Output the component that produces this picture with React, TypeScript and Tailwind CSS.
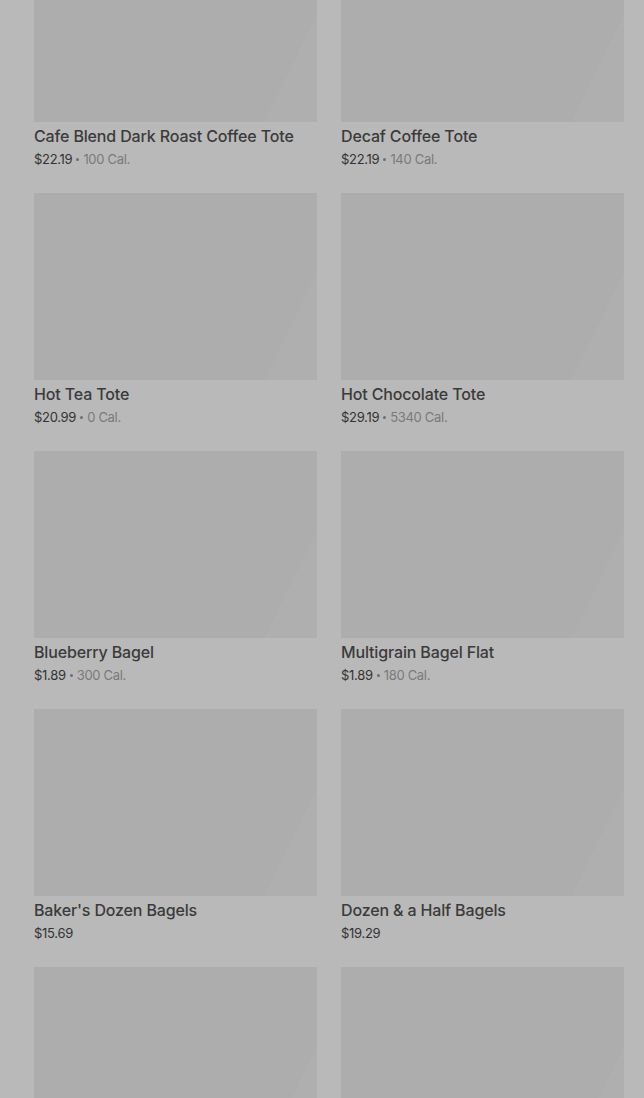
import React from "react";

type Item = { name: string; price: string; cal?: string };

const items: Item[] = [
  { name: "Cafe Blend Dark Roast Coffee Tote", price: "$22.19", cal: "100 Cal." },
  { name: "Decaf Coffee Tote", price: "$22.19", cal: "140 Cal." },
  { name: "Hot Tea Tote", price: "$20.99", cal: "0 Cal." },
  { name: "Hot Chocolate Tote", price: "$29.19", cal: "5340 Cal." },
  { name: "Blueberry Bagel", price: "$1.89", cal: "300 Cal." },
  { name: "Multigrain Bagel Flat", price: "$1.89", cal: "180 Cal." },
  { name: "Baker's Dozen Bagels", price: "$15.69" },
  { name: "Dozen & a Half Bagels", price: "$19.29" },
  { name: "", price: "" },
  { name: "", price: "" },
];

function Card({ item }: { item: Item }) {
  return (
    <div className="flex flex-col">
      <div className="h-[187px] w-full bg-[linear-gradient(116deg,#adadad_86%,#afafaf_86%)]" />
      <div className="h-[71px] pt-[4px]">
        {item.name && (
          <>
            <div className="text-[16px] leading-[20px] font-medium text-[#3b3b3b] tracking-[-0.15px]">
              {item.name}
            </div>
            <div className="mt-[4px] flex items-center text-[13px] leading-[18px] tracking-[-0.3px]">
              <span className="text-[#333333]">{item.price}</span>
              {item.cal && (
                <>
                  <span className="mx-[4px] inline-block h-[3px] w-[3px] rounded-full bg-[#6e6e6e]" />
                  <span className="text-[#7a7a7a]">{item.cal}</span>
                </>
              )}
            </div>
          </>
        )}
      </div>
    </div>
  );
}

export default function App() {
  return (
    <div
      className="h-[1098px] w-[644px] overflow-hidden bg-[#b9b9b9]"
      style={{ fontFamily: "Inter, 'Liberation Sans', sans-serif" }}
    >
      <div className="-mt-[65px] grid grid-cols-2 gap-x-[24px] pl-[34px] pr-[20px]">
        {items.map((it, i) => (
          <Card key={i} item={it} />
        ))}
      </div>
    </div>
  );
}
